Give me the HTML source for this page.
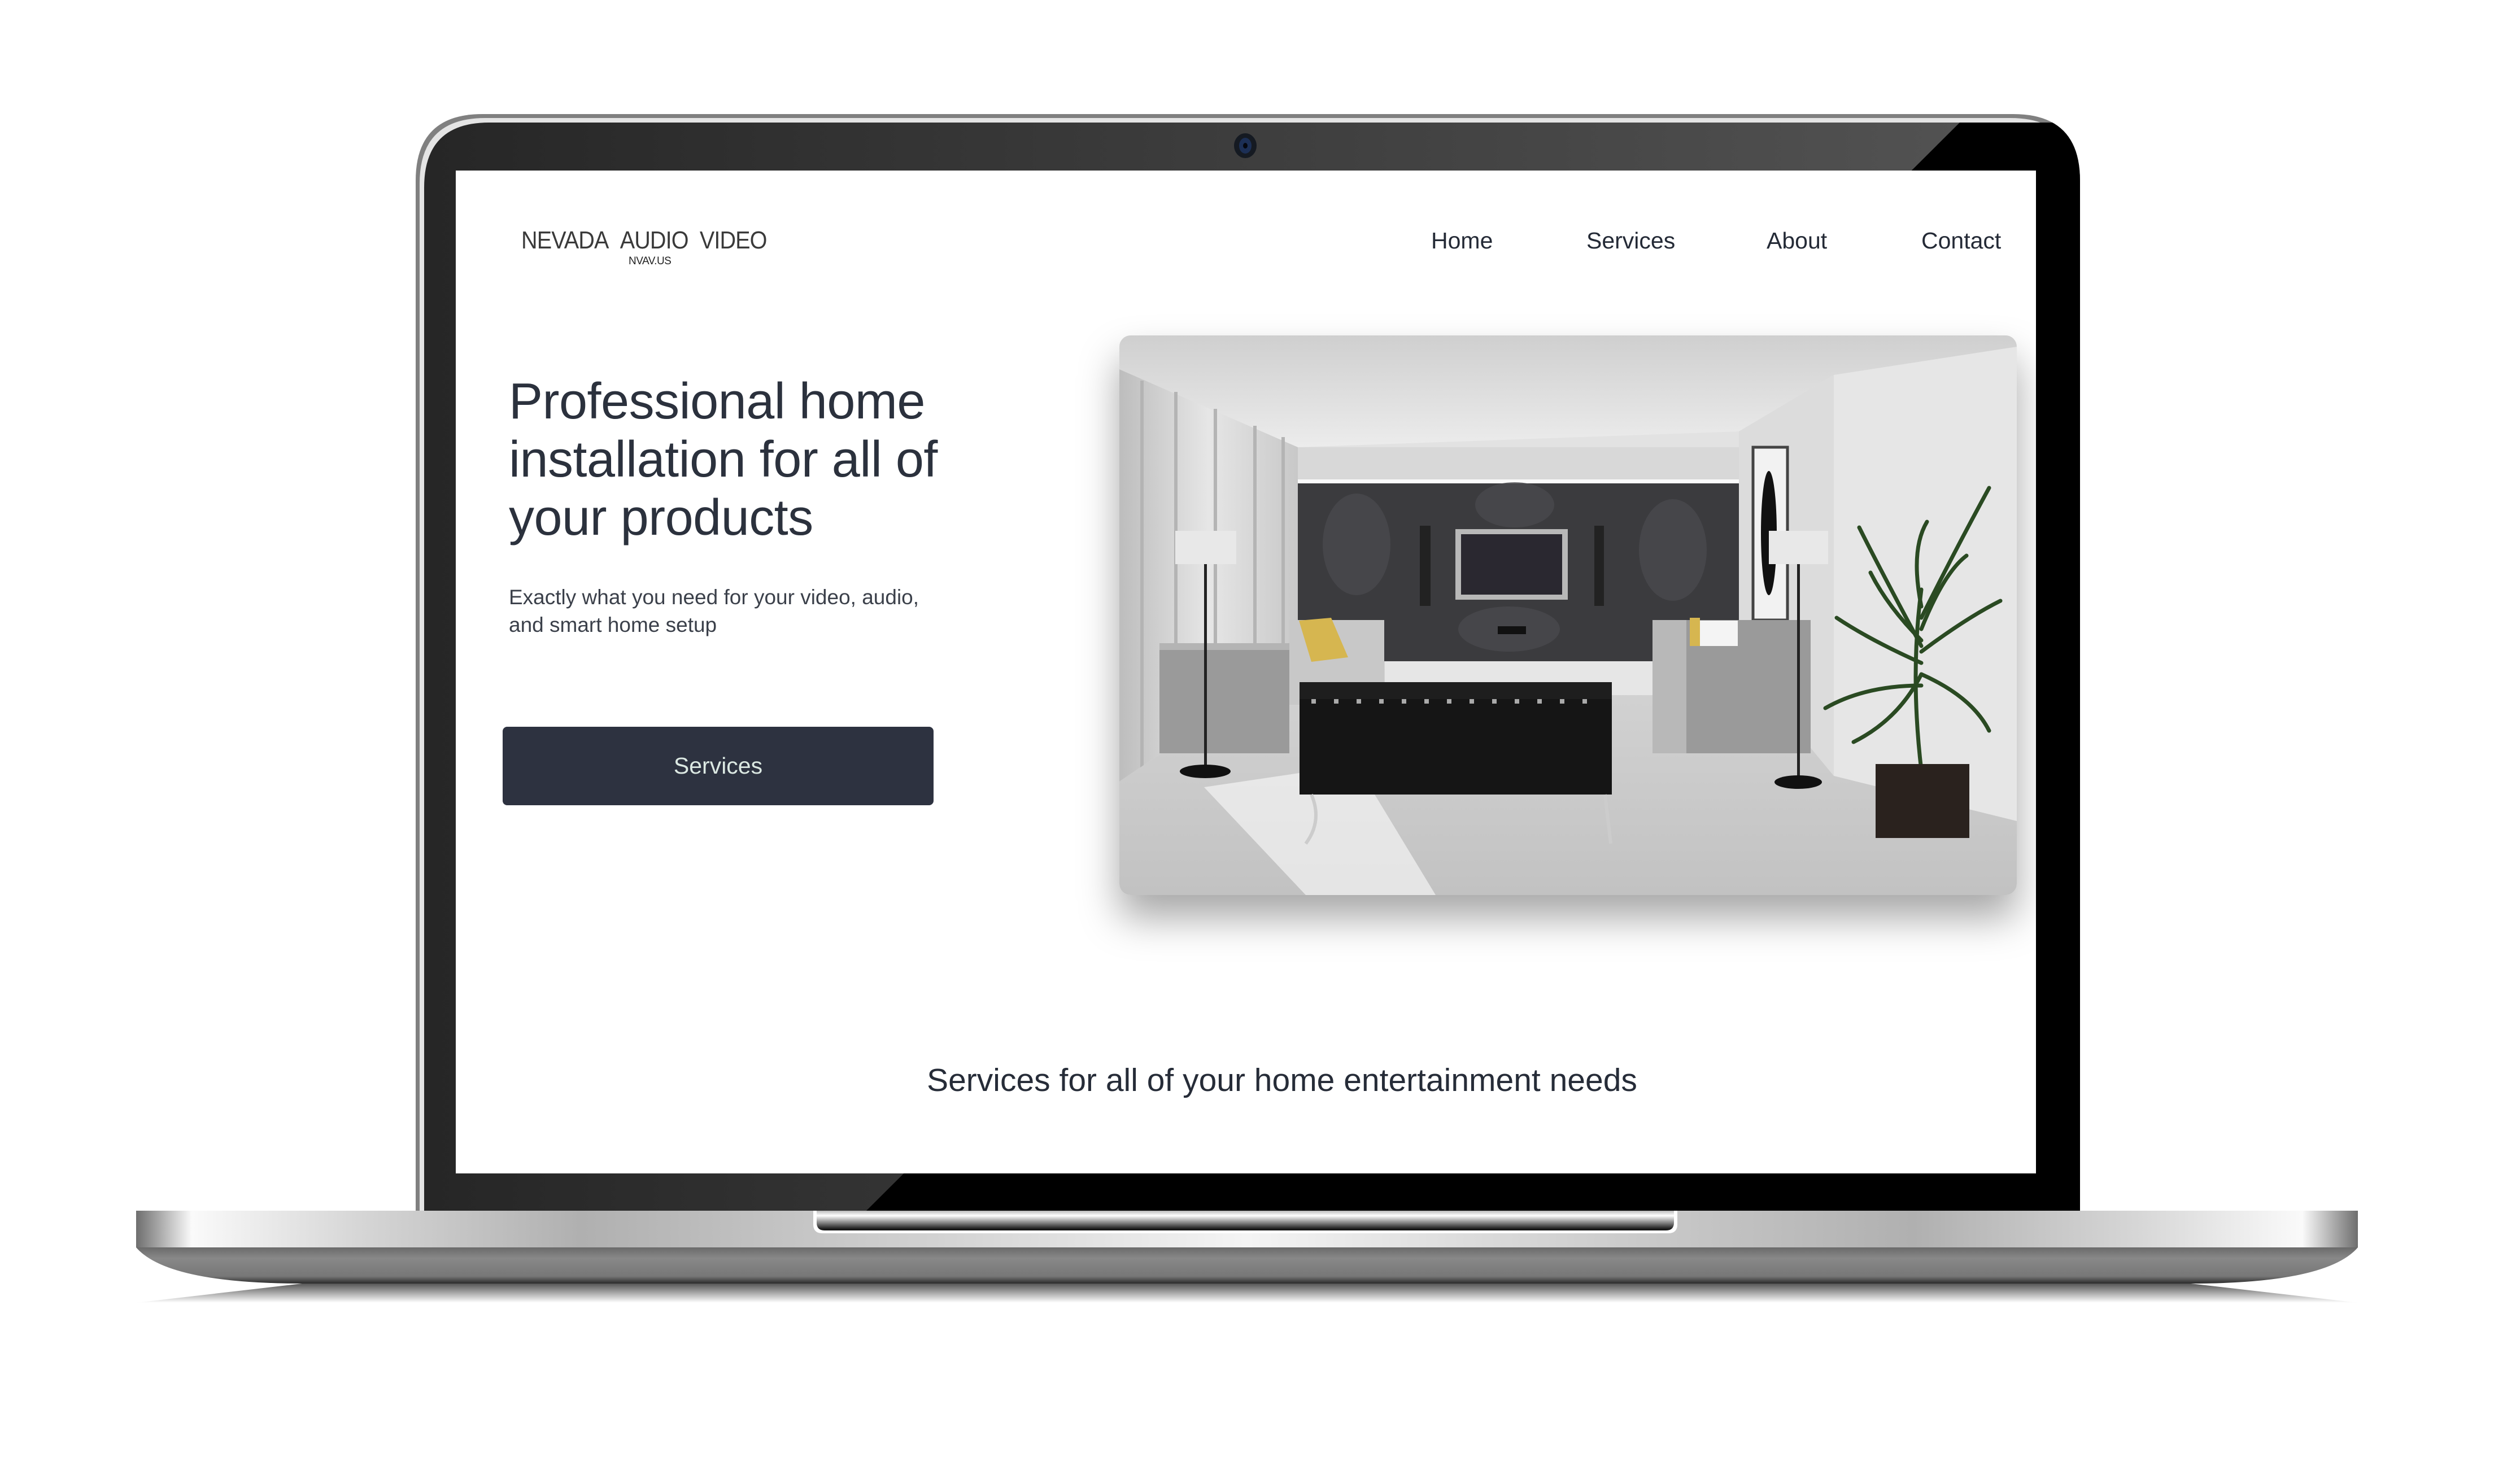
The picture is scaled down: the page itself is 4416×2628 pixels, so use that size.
<!DOCTYPE html>
<html><head><meta charset="utf-8">
<style>
html,body{margin:0;padding:0;background:#fff;}
body{width:4416px;height:2628px;position:relative;overflow:hidden;font-family:"Liberation Sans",sans-serif;}
.abs{position:absolute;}
.screen{position:absolute;left:807px;top:302px;width:2798px;height:1776px;background:#fff;overflow:hidden;}
.nav{position:absolute;top:100px;font-size:41px;color:#242a36;line-height:48px;}
h1{position:absolute;margin:0;left:94px;top:358px;font-weight:400;font-size:90px;line-height:103px;color:#2b313d;letter-spacing:-0.5px;white-space:nowrap;}
.p{position:absolute;left:94px;top:731px;font-size:37px;line-height:49px;color:#3b404a;white-space:nowrap;}
.btn{position:absolute;left:83px;top:985px;width:763px;height:139px;background:#2d3240;border-radius:8px;color:#dbe8e2;font-size:41px;text-align:center;line-height:139px;}
.img{position:absolute;left:1175px;top:292px;width:1589px;height:991px;border-radius:20px;overflow:hidden;box-shadow:0 40px 70px rgba(0,0,0,.35);}
.h2{position:absolute;left:0;width:2926px;top:1578px;text-align:center;font-size:57px;color:#262c38;letter-spacing:0px;}
</style></head><body>

<svg class="abs" style="left:0;top:0" width="4416" height="2628" viewBox="0 0 4416 2628">
<defs>
<linearGradient id="bez" x1="0" x2="1" y1="0" y2="0">
<stop offset="0" stop-color="#262626"/><stop offset="1" stop-color="#555"/></linearGradient>
<linearGradient id="silver" x1="0" x2="1">
<stop offset="0" stop-color="#6e6e6e"/><stop offset="0.025" stop-color="#fafafa"/>
<stop offset="0.1" stop-color="#d6d6d6"/><stop offset="0.2" stop-color="#b0b0b0"/>
<stop offset="0.35" stop-color="#d0d0d0"/><stop offset="0.5" stop-color="#f4f4f4"/>
<stop offset="0.65" stop-color="#d0d0d0"/><stop offset="0.8" stop-color="#b0b0b0"/>
<stop offset="0.9" stop-color="#d6d6d6"/><stop offset="0.975" stop-color="#fafafa"/>
<stop offset="1" stop-color="#6e6e6e"/></linearGradient>
<linearGradient id="under" x1="0" x2="0" y1="0" y2="1">
<stop offset="0" stop-color="#6a6a6a"/><stop offset="0.3" stop-color="#888"/>
<stop offset="0.8" stop-color="#777"/><stop offset="1" stop-color="#2a2a2a"/></linearGradient>
<linearGradient id="refl" x1="0" x2="0" y1="0" y2="1">
<stop offset="0" stop-color="#555"/><stop offset="1" stop-color="#fff"/></linearGradient>
<linearGradient id="notch" x1="0" x2="0" y1="0" y2="1">
<stop offset="0" stop-color="#bbb"/><stop offset="0.25" stop-color="#fff"/>
<stop offset="0.55" stop-color="#999"/><stop offset="0.9" stop-color="#222"/><stop offset="1" stop-color="#111"/></linearGradient>
<clipPath id="lidc"><path d="M736 2144 V320 Q736 202 854 202 H3565 Q3683 202 3683 320 V2144 Z"/></clipPath>
</defs>
<path d="M736 2144 V320 Q736 202 854 202 H3565 Q3683 202 3683 320 V2144 Z" fill="#808080"/>
<path d="M743 2144 V325 Q743 209 859 209 H3560 Q3676 209 3676 325 V2144 Z" fill="#e4e4e4"/>
<path d="M751 2144 V332 Q751 217 866 217 H3553 Q3668 217 3668 332 V2144 Z" fill="url(#bez)"/>
<g clip-path="url(#lidc)">
<polygon points="3470,217 3700,217 3700,2144 1534,2144" fill="#000"/>
</g>
<ellipse cx="2205" cy="258" rx="20" ry="22" fill="#151a22"/>
<ellipse cx="2205" cy="258" rx="11" ry="14" fill="#1c2f55"/>
<ellipse cx="2205" cy="258" rx="4" ry="5" fill="#05080f"/>
<polygon points="535,2273 3879,2273 4175,2307 241,2307" fill="url(#refl)"/>
<path d="M241 2209 H4175 Q4120 2273 3879 2273 H535 Q296 2273 241 2209 Z" fill="url(#under)"/>
<rect x="241" y="2144" width="3934" height="65" fill="url(#silver)"/>
<path d="M1440 2144 H2970 V2168 Q2970 2184 2954 2184 H1456 Q1440 2184 1440 2168 Z" fill="#fff"/>
<path d="M1446 2144 H2964 V2165 Q2964 2179 2950 2179 H1460 Q1446 2179 1446 2165 Z" fill="url(#notch)"/>
</svg>

<div class="screen">
  <div class="abs" style="left:116px;top:104px;font-size:44px;color:#3a3a3a;letter-spacing:-1px;transform:scaleX(0.9);transform-origin:left;white-space:nowrap;line-height:40px;">NEVADA&nbsp;&nbsp;AUDIO&nbsp;&nbsp;VIDEO</div>
  <div class="abs" style="left:306px;top:152px;font-size:19px;color:#222;letter-spacing:-0.5px;line-height:18px;">NVAV.US</div>

  <div class="nav" style="left:1727px">Home</div>
  <div class="nav" style="left:2002px">Services</div>
  <div class="nav" style="left:2321px">About</div>
  <div class="nav" style="left:2595px">Contact</div>

  <h1>Professional home<br>installation for all of<br>your products</h1>
  <div class="p">Exactly what you need for your video, audio,<br>and smart home setup</div>
  <div class="btn">Services</div>

  <div class="img">
    <svg width="1589" height="991" viewBox="0 0 1589 991">
      <defs>
        <linearGradient id="floor" x1="0" x2="0" y1="0" y2="1"><stop offset="0" stop-color="#d4d4d4"/><stop offset="1" stop-color="#c2c2c2"/></linearGradient>
        <linearGradient id="ceil" x1="0" x2="0" y1="0" y2="1"><stop offset="0" stop-color="#cfcfcf"/><stop offset="1" stop-color="#ececec"/></linearGradient>
        <linearGradient id="curt" x1="0" x2="1"><stop offset="0" stop-color="#bdbdbd"/><stop offset="0.5" stop-color="#e6e6e6"/><stop offset="1" stop-color="#c8c8c8"/></linearGradient>
      </defs>
      <rect width="1589" height="991" fill="#e2e2e2"/>
      <polygon points="0,0 1589,0 1589,40 1265,70 1097,170 316,198 0,60" fill="url(#ceil)"/>
      <rect x="316" y="198" width="781" height="64" fill="#d8d8d8"/>
      <rect x="316" y="255" width="781" height="8" fill="#fafafa"/>
      <rect x="316" y="262" width="781" height="315" fill="#3b3b3e"/>
      <g fill="#4a4a4e" opacity="0.8">
        <ellipse cx="420" cy="370" rx="60" ry="90"/><ellipse cx="700" cy="300" rx="70" ry="40"/>
        <ellipse cx="980" cy="380" rx="60" ry="90"/><ellipse cx="690" cy="520" rx="90" ry="40"/>
      </g>
      <polygon points="1097,170 1265,70 1265,780 1097,700" fill="#dcdcdc"/>
      <polygon points="1265,70 1589,20 1589,860 1265,780" fill="#e6e6e6"/>
      <polygon points="0,60 316,198 316,577 0,790" fill="url(#curt)"/>
      <g stroke="#b4b4b4" stroke-width="6">
        <line x1="40" y1="80" x2="40" y2="770"/><line x1="100" y1="100" x2="100" y2="720"/><line x1="170" y1="130" x2="170" y2="680"/><line x1="240" y1="160" x2="240" y2="620"/><line x1="290" y1="180" x2="290" y2="590"/>
      </g>
      <polygon points="0,790 316,577 1097,577 1265,780 1589,860 1589,991 0,991" fill="url(#floor)"/>
      <polygon points="150,800 420,760 560,991 330,991" fill="#f4f4f4" opacity="0.7"/>
      <rect x="1122" y="198" width="61" height="306" fill="#f2f2f2" stroke="#444" stroke-width="5"/>
      <ellipse cx="1150" cy="350" rx="14" ry="110" fill="#111"/>
      <rect x="532" y="337" width="19" height="142" fill="#222"/>
      <rect x="841" y="337" width="17" height="142" fill="#222"/>
      <rect x="595" y="343" width="199" height="125" fill="#b8b8b8"/>
      <rect x="605" y="352" width="179" height="107" fill="#2a2830"/>
      <rect x="670" y="515" width="50" height="14" fill="#111"/>
      <rect x="71" y="545" width="230" height="195" fill="#9a9a9a"/>
      <rect x="301" y="504" width="168" height="150" fill="#c8c8c8"/>
      <rect x="71" y="545" width="230" height="12" fill="#b4b4b4"/>
      <polygon points="318,505 375,500 405,570 340,578" fill="#d6b650"/>
      <rect x="944" y="504" width="280" height="236" fill="#9a9a9a"/>
      <rect x="944" y="504" width="60" height="236" fill="#b8b8b8"/>
      <rect x="1020" y="505" width="75" height="45" fill="#f4f4f4"/>
      <rect x="1010" y="500" width="18" height="50" fill="#d6b650"/>
      <rect x="470" y="577" width="474" height="60" fill="#e6e6e6"/>
      <rect x="319" y="614" width="553" height="199" fill="#151515"/>
      <rect x="319" y="614" width="553" height="30" fill="#1e1e1e"/>
      <g fill="#aaa">
        <rect x="340" y="644" width="8" height="8"/><rect x="380" y="644" width="8" height="8"/><rect x="420" y="644" width="8" height="8"/><rect x="460" y="644" width="8" height="8"/><rect x="500" y="644" width="8" height="8"/><rect x="540" y="644" width="8" height="8"/><rect x="580" y="644" width="8" height="8"/><rect x="620" y="644" width="8" height="8"/><rect x="660" y="644" width="8" height="8"/><rect x="700" y="644" width="8" height="8"/><rect x="740" y="644" width="8" height="8"/><rect x="780" y="644" width="8" height="8"/><rect x="820" y="644" width="8" height="8"/>
      </g>
      <path d="M340 813 Q360 860 330 900 M860 813 L870 900" stroke="#ccc" stroke-width="6" fill="none"/>
      <rect x="99" y="346" width="108" height="59" fill="#e8e8e8"/>
      <rect x="150" y="405" width="5" height="367" fill="#222"/>
      <ellipse cx="152" cy="772" rx="45" ry="12" fill="#111"/>
      <rect x="1150" y="346" width="105" height="59" fill="#e8e8e8"/>
      <rect x="1200" y="405" width="5" height="386" fill="#222"/>
      <ellipse cx="1202" cy="791" rx="42" ry="12" fill="#111"/>
      <g stroke="#2a4a22" stroke-width="7" fill="none" stroke-linecap="round">
        <path d="M1420 770 Q1400 600 1420 450"/><path d="M1420 550 Q1350 420 1310 340"/><path d="M1420 500 Q1480 380 1540 270"/><path d="M1420 560 Q1500 500 1560 470"/><path d="M1420 580 Q1330 540 1270 500"/><path d="M1420 620 Q1320 620 1250 660"/><path d="M1420 600 Q1510 640 1540 700"/><path d="M1420 480 Q1400 380 1430 330"/><path d="M1420 600 Q1380 680 1300 720"/><path d="M1420 520 Q1460 420 1500 390"/><path d="M1420 540 Q1360 480 1330 420"/>
      </g>
      <rect x="1339" y="759" width="166" height="131" fill="#2a221e"/>
    </svg>
  </div>

  <div class="h2">Services for all of your home entertainment needs</div>
</div>
</body></html>
